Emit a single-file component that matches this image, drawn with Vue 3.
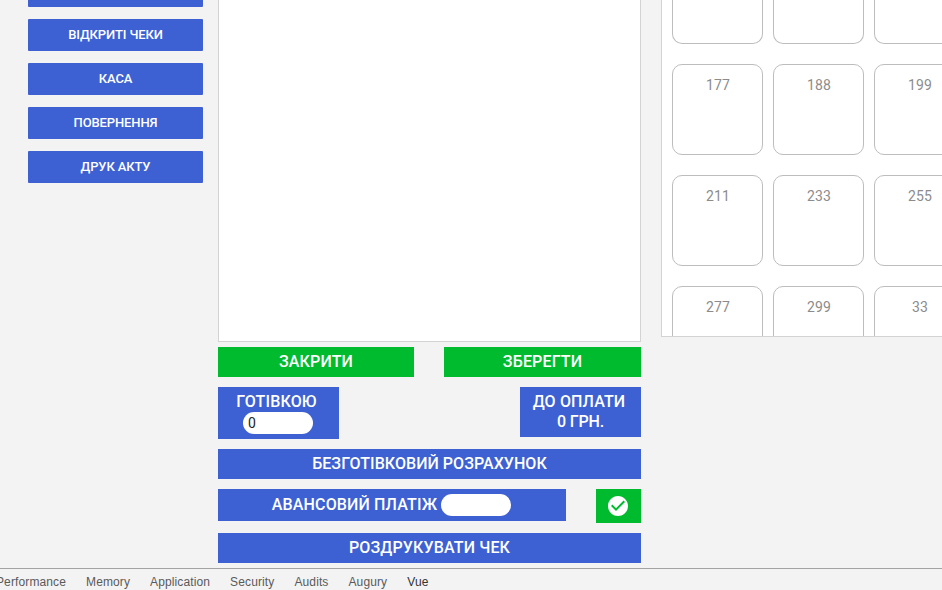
<script setup>
const menu = ['', 'ВІДКРИТІ ЧЕКИ', 'КАСА', 'ПОВЕРНЕННЯ', 'ДРУК АКТУ']
const products = ['', '', '', '177', '188', '199', '211', '233', '255', '277', '299', '33']
const tabs = ['Performance', 'Memory', 'Application', 'Security', 'Audits', 'Augury', 'Vue']
</script>

<template>
  <div class="screen">
    <main class="workspace">
      <nav class="menu">
        <button v-for="(item, i) in menu" :key="i" class="menu-button">{{ item }}</button>
      </nav>

      <section class="receipt">
        <div class="receipt-list"></div>
        <div class="row actions">
          <button class="pay green close">ЗАКРИТИ</button>
          <button class="pay green save">ЗБЕРЕГТИ</button>
        </div>
        <div class="row totals">
          <label class="pay cash">
            <span>ГОТІВКОЮ</span>
            <input class="amount" value="0" />
          </label>
          <div class="pay due"><span>ДО ОПЛАТИ</span><span class="sum">0 ГРН.</span></div>
        </div>
        <button class="pay wide cashless">БЕЗГОТІВКОВИЙ РОЗРАХУНОК</button>
        <div class="row advance-row">
          <label class="pay advance">
            <span>АВАНСОВИЙ ПЛАТІЖ</span>
            <input class="amount" />
          </label>
          <button class="pay green confirm">
            <svg width="24" height="24" viewBox="0 0 24 24" fill="#fff">
              <path d="M12 2C6.480 2 2 6.480 2 12s4.480 10 10 10 10-4.480 10-10S17.520 2 12 2zm-2 15l-5-5 1.410-1.410L10 14.170l7.590-7.590L19 8l-9 9z" />
            </svg>
          </button>
        </div>
        <button class="pay wide">РОЗДРУКУВАТИ ЧЕК</button>
      </section>

      <section class="catalog">
        <div v-for="(p, i) in products" :key="i" class="product">{{ p }}</div>
      </section>
    </main>

    <footer class="devtools">
      <span v-for="tab in tabs" :key="tab" class="tab" :class="{ active: tab === 'Vue' }">{{ tab }}</span>
    </footer>
  </div>
</template>

<style>
body {
  background: #f3f3f3;
  overflow: hidden;
}
</style>

<style scoped>
.screen {
  width: 942px;
  height: 590px;
  overflow: hidden;
  display: flex;
  flex-direction: column;
  background: #f3f3f3;
  font-family: Roboto, sans-serif;
}
.screen * {
  box-sizing: border-box;
}
button,
input {
  border: 0;
  margin: 0;
  padding: 0;
  font-family: inherit;
}
.workspace {
  height: 568px;
  flex: none;
  display: flex;
  align-items: flex-start;
  overflow: hidden;
}
.menu {
  width: 175px;
  margin: -25px 15px 0 28px;
  flex: none;
  display: flex;
  flex-direction: column;
  gap: 12px;
}
.menu-button {
  height: 32px;
  border-radius: 1px;
  background: #3d61d3;
  color: #fff;
  font-size: 13px;
  font-weight: 500;
  line-height: 32px;
  letter-spacing: -0.12px;
}
.receipt {
  width: 423px;
  flex: none;
  display: flex;
  flex-direction: column;
}
.receipt-list {
  height: 342px;
  background: #fff;
  border: 1px solid #d3d3d3;
  border-top: 0;
}
.row {
  display: flex;
  justify-content: space-between;
  align-items: flex-start;
}
.actions {
  margin-top: 5px;
}
.totals {
  margin-top: 10px;
  height: 52px;
}
.pay {
  background: #3d61d3;
  color: #fff;
  font-size: 16px;
  font-weight: 500;
  line-height: 20px;
  letter-spacing: 0.15px;
  text-align: center;
}
.green {
  background: #00bb2d;
}
.close,
.save {
  width: 196px;
  height: 30px;
}
.save {
  width: 197px;
}
.cash,
.due {
  width: 121px;
  display: flex;
  flex-direction: column;
  align-items: center;
}
.cash {
  height: 52px;
  padding: 5px 4px 0 0;
}
.due {
  height: 50px;
  padding: 5px 3px 0 0;
}
.sum {
  padding-left: 3px;
  letter-spacing: -0.15px;
}
.amount {
  width: 70px;
  height: 22px;
  flex: none;
  padding: 0 5px;
  border-radius: 11px;
  background: #fff;
  color: #222;
  font-size: 14px;
}
.cash .amount {
  margin-left: 3px;
}
.wide {
  width: 423px;
  height: 30px;
  margin-top: 10px;
}
.cashless {
  letter-spacing: 0.05px;
}
.advance-row {
  margin-top: 10px;
  height: 34px;
}
.advance {
  width: 348px;
  height: 32px;
  display: flex;
  align-items: center;
  justify-content: center;
  gap: 4px;
  padding-right: 1px;
}
.confirm {
  width: 45px;
  height: 34px;
  padding-right: 1px;
  display: flex;
  align-items: center;
  justify-content: center;
}
.catalog {
  width: 320px;
  height: 337px;
  margin-left: 20px;
  padding-left: 10px;
  flex: none;
  display: grid;
  grid-template-columns: repeat(3, 91px);
  grid-template-rows: 44px;
  grid-auto-rows: 91px;
  align-content: start;
  gap: 20px 10px;
  overflow: hidden;
  background: #fff;
  border: 1px solid #d3d3d3;
  border-top: 0;
}
.product {
  padding: 10px 0 0 1px;
  border: 1px solid #bdbdbd;
  border-radius: 10px;
  color: #8c8c8c;
  font-size: 14px;
  line-height: 20px;
  text-align: center;
  letter-spacing: 0.1px;
}
.product:nth-child(-n + 3) {
  border-top: 0;
  border-top-left-radius: 0;
  border-top-right-radius: 0;
}
.devtools {
  height: 22px;
  display: flex;
  gap: 20px;
  padding-top: 5px;
  margin-left: -4px;
  border-top: 1px solid #a3a3a3;
  background: #f3f3f3;
  font: 12px/16px "Liberation Sans", Arial, sans-serif;
  letter-spacing: 0.12px;
  color: #5a5a5a;
}
.active {
  color: #333;
}
</style>
